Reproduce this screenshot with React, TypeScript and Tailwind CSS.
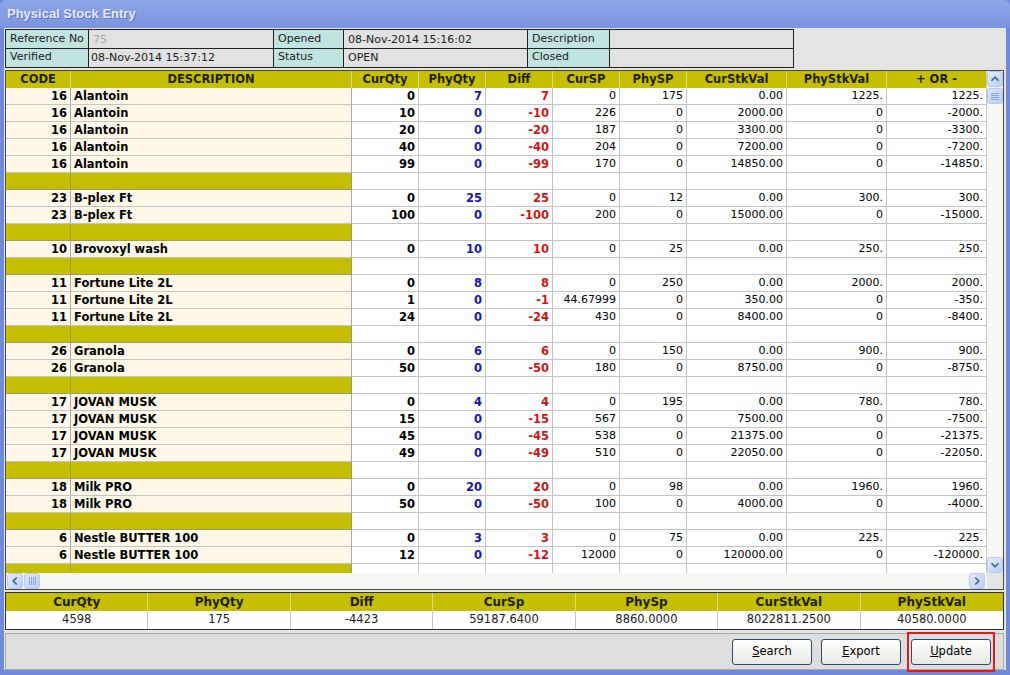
import { FC } from "react";

type Row = [string, string, string, string, string, string, string, string, string, string] | null;

const rows: Row[] = [
  ["16", "Alantoin", "0", "7", "7", "0", "175", "0.00", "1225.", "1225."],
  ["16", "Alantoin", "10", "0", "-10", "226", "0", "2000.00", "0", "-2000."],
  ["16", "Alantoin", "20", "0", "-20", "187", "0", "3300.00", "0", "-3300."],
  ["16", "Alantoin", "40", "0", "-40", "204", "0", "7200.00", "0", "-7200."],
  ["16", "Alantoin", "99", "0", "-99", "170", "0", "14850.00", "0", "-14850."],
  null,
  ["23", "B-plex Ft", "0", "25", "25", "0", "12", "0.00", "300.", "300."],
  ["23", "B-plex Ft", "100", "0", "-100", "200", "0", "15000.00", "0", "-15000."],
  null,
  ["10", "Brovoxyl wash", "0", "10", "10", "0", "25", "0.00", "250.", "250."],
  null,
  ["11", "Fortune Lite 2L", "0", "8", "8", "0", "250", "0.00", "2000.", "2000."],
  ["11", "Fortune Lite 2L", "1", "0", "-1", "44.67999", "0", "350.00", "0", "-350."],
  ["11", "Fortune Lite 2L", "24", "0", "-24", "430", "0", "8400.00", "0", "-8400."],
  null,
  ["26", "Granola", "0", "6", "6", "0", "150", "0.00", "900.", "900."],
  ["26", "Granola", "50", "0", "-50", "180", "0", "8750.00", "0", "-8750."],
  null,
  ["17", "JOVAN MUSK", "0", "4", "4", "0", "195", "0.00", "780.", "780."],
  ["17", "JOVAN MUSK", "15", "0", "-15", "567", "0", "7500.00", "0", "-7500."],
  ["17", "JOVAN MUSK", "45", "0", "-45", "538", "0", "21375.00", "0", "-21375."],
  ["17", "JOVAN MUSK", "49", "0", "-49", "510", "0", "22050.00", "0", "-22050."],
  null,
  ["18", "Milk PRO", "0", "20", "20", "0", "98", "0.00", "1960.", "1960."],
  ["18", "Milk PRO", "50", "0", "-50", "100", "0", "4000.00", "0", "-4000."],
  null,
  ["6", "Nestle BUTTER 100", "0", "3", "3", "0", "75", "0.00", "225.", "225."],
  ["6", "Nestle BUTTER 100", "12", "0", "-12", "12000", "0", "120000.00", "0", "-120000."],
  null,
];

const headers = ["CODE", "DESCRIPTION", "CurQty", "PhyQty", "Diff", "CurSP", "PhySP", "CurStkVal", "PhyStkVal", "+ OR -"];

const gridCols = "grid grid-cols-[65px_281px_67px_67px_67px_67px_67px_100px_100px_100px]";

// colour/weight per column for the data cells
const cellStyle = [
  "bg-[#fff8e9] font-bold text-right text-black text-[11.5px] border-r-[#a8a8a8]",
  "bg-[#fff8e9] font-bold text-left text-black text-[11.5px] pl-[3px] border-r-[#a8a8a8]",
  "bg-white font-bold text-right text-black text-[11.5px]",
  "bg-white font-bold text-right text-[#1414b4] text-[11.5px]",
  "bg-white font-bold text-right text-[#d41414] text-[11.5px]",
  "bg-white text-right text-black text-[11px]",
  "bg-white text-right text-black text-[11px]",
  "bg-white text-right text-black text-[11px]",
  "bg-white text-right text-black text-[11px]",
  "bg-white text-right text-black text-[11px]",
];

const summary = [
  ["CurQty", "4598"],
  ["PhyQty", "175"],
  ["Diff", "-4423"],
  ["CurSp", "59187.6400"],
  ["PhySp", "8860.0000"],
  ["CurStkVal", "8022811.2500"],
  ["PhyStkVal", "40580.0000"],
];

const ArrowBtn: FC<{ dir: "up" | "down" | "left" | "right" }> = ({ dir }) => {
  const paths = {
    up: "M4 10 L8 6 L12 10",
    down: "M4 6 L8 10 L12 6",
    left: "M10 4 L6 8 L10 12",
    right: "M6 4 L10 8 L6 12",
  };
  return (
    <div className="w-[16px] h-[16px] rounded-[3px] border border-[#b8c8f0] bg-gradient-to-br from-[#e4ecfc] to-[#b8cdf6] flex items-center justify-center">
      <svg width="16" height="16" viewBox="0 0 16 16">
        <path d={paths[dir]} fill="none" stroke="#4d6185" strokeWidth="2" />
      </svg>
    </div>
  );
};

const Thumb: FC<{ vertical?: boolean }> = ({ vertical }) => (
  <div className="w-[16px] h-[16px] rounded-[3px] border border-[#b8c8f0] bg-gradient-to-br from-[#d8e4fc] to-[#bcd0f6] flex items-center justify-center">
    <svg width="10" height="10" viewBox="0 0 10 10">
      {vertical ? (
        <g stroke="#8fa6d8" strokeWidth="1">
          <line x1="1" y1="2.5" x2="9" y2="2.5" />
          <line x1="1" y1="4.5" x2="9" y2="4.5" />
          <line x1="1" y1="6.5" x2="9" y2="6.5" />
          <line x1="1" y1="8.5" x2="9" y2="8.5" />
        </g>
      ) : (
        <g stroke="#8fa6d8" strokeWidth="1">
          <line x1="2.5" y1="1" x2="2.5" y2="9" />
          <line x1="4.5" y1="1" x2="4.5" y2="9" />
          <line x1="6.5" y1="1" x2="6.5" y2="9" />
          <line x1="8.5" y1="1" x2="8.5" y2="9" />
        </g>
      )}
    </svg>
  </div>
);

const XpButton: FC<{ hot: string; rest: string }> = ({ hot, rest }) => (
  <button className="w-[80px] h-[26px] rounded-[3px] border border-[#2a4a74] bg-gradient-to-b from-white to-[#e8e8e2] text-[11.5px] text-black font-['DejaVu_Sans',sans-serif]">
    <span className="underline">{hot}</span>
    {rest}
  </button>
);

const App: FC = () => {
  return (
    <div className="w-[1010px] h-[675px] bg-[#6f8ad8] flex flex-col overflow-hidden font-['DejaVu_Sans',sans-serif]">
      {/* title bar */}
      <div className="h-[28px] shrink-0 bg-gradient-to-b from-[#8ea5e8] to-[#7a94de] rounded-t-[6px] flex items-center pl-[7px]">
        <span className="text-[13px] font-bold text-[#e6ecfc] font-['Liberation_Sans',sans-serif] [text-shadow:1px_1px_0_#5a72c0]">
          Physical Stock Entry
        </span>
      </div>

      {/* window body */}
      <div className="flex-1 ml-[4px] mr-[4px] mb-[5px] bg-[#e4e4e4] flex flex-col pl-[1px]">
        {/* info header */}
        <div className="mt-[1px] w-[789px] border border-[#202020] grid grid-cols-[83px_185px_70px_184px_82px_183px] text-[11px] text-[#202020]">
          <div className="h-[19px] bg-[#c2e4e0] border-r border-b border-[#202020] pl-[4px] leading-[17px]">Reference No</div>
          <div className="h-[19px] bg-[#e2e2e2] border-r border-b border-[#202020] pl-[4px] leading-[19px] text-[#a8a8a8]">75</div>
          <div className="h-[19px] bg-[#c2e4e0] border-r border-b border-[#202020] pl-[4px] leading-[17px]">Opened</div>
          <div className="h-[19px] bg-[#e2e2e2] border-r border-b border-[#202020] pl-[4px] leading-[19px]">08-Nov-2014 15:16:02</div>
          <div className="h-[19px] bg-[#c2e4e0] border-r border-b border-[#202020] pl-[4px] leading-[17px]">Description</div>
          <div className="h-[19px] bg-[#e2e2e2] border-b border-[#202020]"></div>
          <div className="h-[18px] bg-[#c2e4e0] border-r border-[#202020] pl-[4px] leading-[15px]">Verified</div>
          <div className="h-[18px] bg-[#e2e2e2] border-r border-[#202020] pl-[2px] leading-[18px]">08-Nov-2014 15:37:12</div>
          <div className="h-[18px] bg-[#c2e4e0] border-r border-[#202020] pl-[4px] leading-[15px]">Status</div>
          <div className="h-[18px] bg-[#e2e2e2] border-r border-[#202020] pl-[4px] leading-[18px]">OPEN</div>
          <div className="h-[18px] bg-[#c2e4e0] border-r border-[#202020] pl-[4px] leading-[15px]">Closed</div>
          <div className="h-[18px] bg-[#e2e2e2]"></div>
        </div>

        {/* main grid */}
        <div className="mt-[2px] w-[999px] h-[520px] border border-[#4a4a4a] flex flex-col bg-white">
          <div className="flex h-[502px]">
            <div className="w-[981px] flex flex-col">
              <div className={`${gridCols} h-[17px] bg-[#c6bf00] text-[11.5px] font-bold text-[#202000]`}>
                {headers.map((h) => (
                  <div key={h} className="text-center leading-[17px] border-r border-[#dcd890] whitespace-nowrap">
                    {h}
                  </div>
                ))}
              </div>
              <div className="h-[485px] overflow-hidden">
                {rows.map((r, i) =>
                  r ? (
                    <div key={i} className={`${gridCols} h-[17px]`}>
                      {r.map((v, j) => (
                        <div
                          key={j}
                          className={`${cellStyle[j]} border-r border-b border-[#c4c4c4] leading-[16px] pr-[3px] whitespace-nowrap overflow-hidden`}
                        >
                          {v}
                        </div>
                      ))}
                    </div>
                  ) : (
                    <div key={i} className={`${gridCols} h-[17px]`}>
                      <div className="bg-[#c6bf00] border-r border-b border-[#9a9a6a]"></div>
                      <div className="bg-[#c6bf00] border-r border-b border-[#9a9a6a]"></div>
                      {[0, 1, 2, 3, 4, 5, 6, 7].map((k) => (
                        <div key={k} className="bg-white border-r border-b border-[#c4c4c4]"></div>
                      ))}
                    </div>
                  )
                )}
              </div>
            </div>
            {/* vertical scrollbar */}
            <div className="w-[16px] bg-[#f6f6f2] flex flex-col">
              <ArrowBtn dir="up" />
              <div className="mt-[1px]">
                <Thumb vertical />
              </div>
              <div className="flex-1"></div>
              <ArrowBtn dir="down" />
            </div>
          </div>
          {/* horizontal scrollbar */}
          <div className="h-[16px] flex bg-[#f6f6f2]">
            <div className="w-[981px] flex pl-[1px]">
              <ArrowBtn dir="left" />
              <div className="ml-[1px]">
                <Thumb />
              </div>
              <div className="flex-1"></div>
              <div className="mr-[2px]">
                <ArrowBtn dir="right" />
              </div>
            </div>
            <div className="w-[16px] bg-[#e4e4e4]"></div>
          </div>
        </div>

        {/* summary totals */}
        <div className="mt-[2px] w-[999px] border border-[#303030] bg-white">
          <div className="grid grid-cols-7 h-[18px] bg-[#c6bf00] text-[12px] font-bold text-[#202000]">
            {summary.map(([h]) => (
              <div key={h} className="text-center leading-[18px] border-r border-[#dcd890] last:border-r-0">
                {h}
              </div>
            ))}
          </div>
          <div className="grid grid-cols-7 h-[18px] text-[11.5px] text-[#202020]">
            {summary.map(([h, v]) => (
              <div key={h} className="text-center leading-[17px] border-r border-[#c4c4c4] last:border-r-0">
                {v}
              </div>
            ))}
          </div>
        </div>

        {/* button panel */}
        <div className="mt-[3px] w-[999px] h-[37px] border border-[#a8a8a8] bg-[#dedede] flex items-center justify-end pr-[12px] gap-[9px]">
          <XpButton hot="S" rest="earch" />
          <XpButton hot="E" rest="xport" />
          <div className="relative ml-[1px]">
            <XpButton hot="U" rest="pdate" />
            <span className="absolute -left-[4px] -right-[4px] -top-[6px] -bottom-[7px] border-2 border-[#e21a1a] pointer-events-none"></span>
          </div>
        </div>
      </div>
    </div>
  );
};

export default App;
